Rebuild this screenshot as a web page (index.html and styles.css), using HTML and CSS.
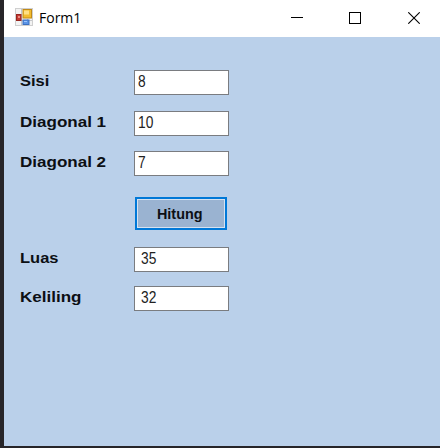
FILE: index.html
```
<!DOCTYPE html>
<html lang="id">
<head>
<meta charset="utf-8">
<title>Form1</title>
<link rel="stylesheet" href="styles.css">
</head>
<body>
<div class="window">
  <header class="titlebar">
    <svg class="app-icon" width="18" height="18" viewBox="0 0 18 18">
      <rect x=".5" y=".5" width="17" height="17" fill="#f3f3f3" stroke="#cfcfcf"/>
      <path d="M1 6.5h6M6.5 1v16M1 12.5h16M12.5 11v6" stroke="#c4c6ca" fill="none"/>
      <rect x="8" y="1.5" width="8.500" height="8.500" fill="#f2bc2e" stroke="#c08a18"/>
      <rect x="9" y="2.5" width="5" height="4" fill="#ffe083"/>
      <rect x="1.500" y="6.500" width="4.500" height="6" fill="#c43a32" stroke="#97251f"/>
      <rect x="3" y="8" width="2" height="2" fill="#ee8a80"/>
      <rect x="8" y="12" width="6" height="4.500" fill="#5b94e6" stroke="#3c70c0"/>
      <rect x="9" y="13" width="3" height="1" fill="#9cc5ff"/>
    </svg>
    <span class="title">Form1</span>
    <div class="controls">
      <svg width="12" height="12" viewBox="0 0 12 12"><path d="M0 5.500h12" stroke="#000"/></svg>
      <svg width="12" height="12" viewBox="0 0 12 12"><rect x=".5" y=".5" width="11" height="11" fill="none" stroke="#000"/></svg>
      <svg class="close" width="12" height="12" viewBox="0 0 12 12"><path d="M.3 .3l11.400 11.400M11.700 .3L.3 11.700" stroke="#000" stroke-width="1.100"/></svg>
    </div>
  </header>
  <main class="form">
    <div class="row sisi"><label><span>Sisi</span></label><div class="field"><span>8</span></div></div>
    <div class="row d1"><label><span>Diagonal 1</span></label><div class="field"><span>10</span></div></div>
    <div class="row d2"><label><span>Diagonal 2</span></label><div class="field"><span>7</span></div></div>
    <button class="calc"><span>Hitung</span></button>
    <div class="row luas"><label><span>Luas</span></label><div class="field result"><span>35</span></div></div>
    <div class="row kel"><label><span>Keliling</span></label><div class="field result"><span>32</span></div></div>
  </main>
</div>
</body>
</html>
```
FILE: styles.css
```
* { box-sizing: border-box; }
body {
  margin: 0;
  width: 440px;
  height: 448px;
  padding: 0 0 2px 4px;
  background: #272529;
  font-family: "Liberation Sans", Arial, sans-serif;
  overflow: hidden;
}
.window { height: 446px; background: #bad0ea; }
.titlebar {
  display: flex;
  align-items: flex-start;
  height: 37px;
  padding: 8px 20px 0 11px;
  background: #fff;
}
.title {
  margin: 0 0 0 6px;
  font: 14px/20px "Open Sans", sans-serif;
  color: #000;
}
.controls { display: flex; gap: 46px; margin: 4px 0 0 auto; }
.controls svg { display: block; }
.controls .close { margin-left: 1px; }
.form { padding: 33px 0 0 16px; }
.row { display: flex; height: 25px; }
.row label {
  width: 114px;
  font-weight: bold;
  font-size: 15px;
  line-height: 21px;
  color: #0c0f14;
}
.row label span { display: inline-block; transform-origin: 0 50%; transform: scaleX(1.135); }
.row.sisi label span, .row.luas label span { transform: scaleX(1.1); }
.field {
  width: 95px;
  height: 25px;
  padding-left: 3px;
  border: 1px solid #7a7c80;
  background: #fff;
  font-size: 16px;
  line-height: 22px;
  color: #222;
}
.field span { display: inline-block; transform-origin: 0 50%; transform: scaleX(.86); }
.result { padding-left: 6px; }
.d1 { margin-top: 16px; }
.d2 { margin-top: 15px; }
.calc {
  display: block;
  width: 92px;
  height: 33px;
  margin: 21px 0 0 115px;
  padding: 0;
  border: 2px solid #0078d7;
  background: #9ab3d1;
  box-shadow: inset 0 0 0 1px #d5e2f1;
  font: bold 15px/28px "Liberation Sans", Arial, sans-serif;
  color: #0c0f14;
}
.calc span { display: inline-block; transform: translateX(-1px) scaleX(.96); }
.luas { margin-top: 17px; }
.kel { margin-top: 14px; }
```
